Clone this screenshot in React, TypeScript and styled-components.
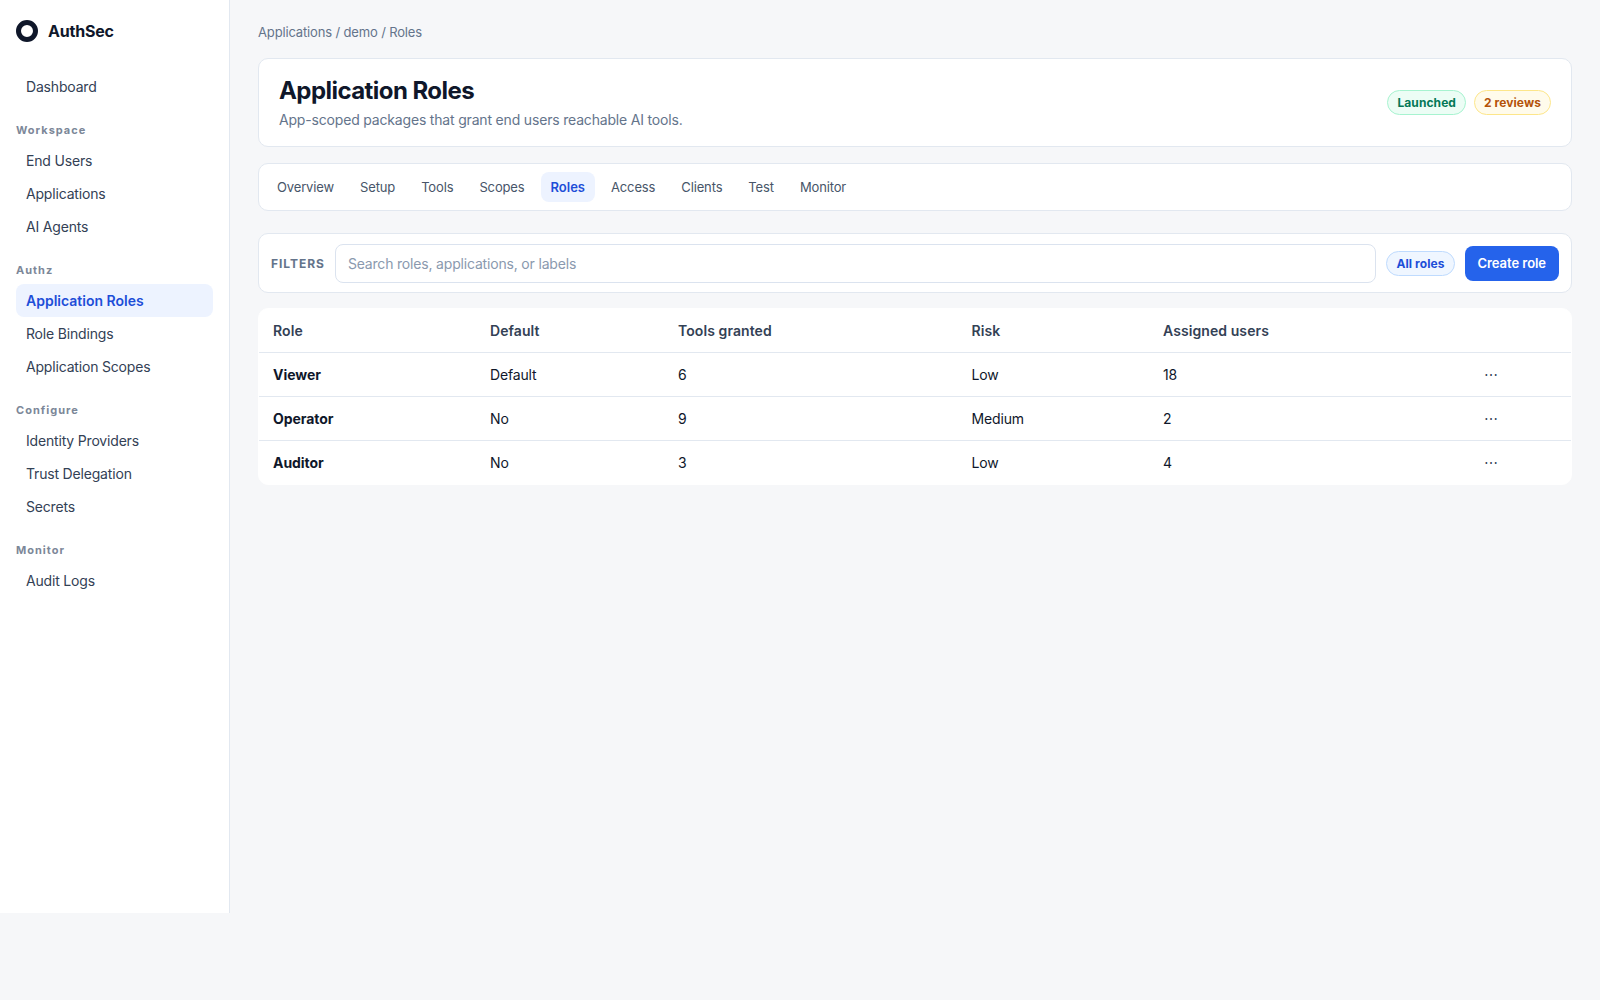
import React from "react";
import styled, { createGlobalStyle } from "styled-components";

const GlobalStyle = createGlobalStyle`
  html, body {
    margin: 0;
    padding: 0;
    background: #f6f7f9;
    font-family: Inter, "Noto Sans", sans-serif;
    color: #0f172a;
  }
  * {
    box-sizing: border-box;
  }
`;

const Shell = styled.div`
  display: flex;
  align-items: flex-start;
  min-height: 1000px;
`;

const Sidebar = styled.aside`
  width: 230px;
  height: 913px;
  flex-shrink: 0;
  padding: 20px 16px;
  background: #fff;
  border-right: 1px solid #e2e8f0;
`;

const Brand = styled.div`
  display: flex;
  align-items: center;
  gap: 10px;
  height: 22px;
  margin-bottom: 28px;
  font-size: 16px;
  font-weight: 700;
  letter-spacing: -0.2px;
  color: #0f172a;
`;

const Logo = styled.span`
  width: 22px;
  height: 22px;
  border-radius: 50%;
  border: 5.5px solid #0f172a;
`;

const NavGroup = styled.div`
  margin-bottom: 20px;
`;

const GroupLabel = styled.div`
  height: 14px;
  line-height: 14px;
  margin: 0 0 7px;
  font-size: 11px;
  font-weight: 700;
  letter-spacing: 1px;
  color: #7c8798;
`;

const NavItem = styled.a<{ $active?: boolean }>`
  display: block;
  height: 33px;
  padding: 0 10px;
  line-height: 33px;
  font-size: 14px;
  border-radius: 8px;
  font-weight: ${(p) => (p.$active ? 600 : 400)};
  letter-spacing: ${(p) => (p.$active ? "0" : "-0.18px")};
  color: ${(p) => (p.$active ? "#1d4ed8" : "#334155")};
  background: ${(p) => (p.$active ? "#edf3ff" : "transparent")};
`;

const Main = styled.main`
  flex: 1;
  min-width: 0;
  padding: 24px 28px;
`;

const Breadcrumb = styled.div`
  height: 17px;
  line-height: 17px;
  margin-bottom: 17px;
  font-size: 13px;
  letter-spacing: -0.15px;
  color: #64748b;
`;

const Card = styled.section`
  background: #fff;
  border: 1px solid #e2e8f0;
  border-radius: 10px;
`;

const HeaderCard = styled(Card)`
  display: flex;
  align-items: center;
  justify-content: space-between;
  height: 89px;
  padding: 0 20px;
  margin-bottom: 16px;
`;

const Title = styled.h1`
  margin: 0 0 3px;
  font-size: 24px;
  line-height: 32px;
  font-weight: 700;
  letter-spacing: -0.56px;
  color: #0f172a;
`;

const Subtitle = styled.p`
  margin: 0;
  font-size: 14px;
  line-height: 20px;
  letter-spacing: -0.18px;
  color: #64748b;
`;

const Badges = styled.div`
  display: flex;
  gap: 8px;
`;

const toneColors = {
  green: { bg: "#ecfdf5", border: "#a7f3d0", text: "#047857" },
  amber: { bg: "#fffbeb", border: "#fde68a", text: "#b45309" },
  blue: { bg: "#eff6ff", border: "#bfdbfe", text: "#1d4ed8" },
};

const Badge = styled.span<{ $tone: keyof typeof toneColors }>`
  display: inline-flex;
  align-items: center;
  height: 25px;
  padding: 0 9px;
  border-radius: 999px;
  font-size: 12px;
  font-weight: 700;
  letter-spacing: 0.08px;
  background: ${(p) => toneColors[p.$tone].bg};
  border: 1px solid ${(p) => toneColors[p.$tone].border};
  color: ${(p) => toneColors[p.$tone].text};
`;

const TabsCard = styled(Card)`
  display: flex;
  align-items: center;
  gap: 6px;
  height: 48px;
  padding: 0 8px;
  margin-bottom: 22px;
`;

const Tab = styled.a<{ $active?: boolean }>`
  height: 30px;
  padding: 0 10px;
  line-height: 30px;
  border-radius: 8px;
  font-size: 13px;
  font-weight: ${(p) => (p.$active ? 600 : 400)};
  letter-spacing: ${(p) => (p.$active ? "0" : "-0.14px")};
  color: ${(p) => (p.$active ? "#1d4ed8" : "#475569")};
  background: ${(p) => (p.$active ? "#edf3ff" : "transparent")};
`;

const FilterCard = styled(Card)`
  display: flex;
  align-items: center;
  gap: 10px;
  height: 60px;
  padding: 0 12px;
  margin-bottom: 15px;
`;

const FilterLabel = styled.span`
  font-size: 12px;
  font-weight: 700;
  letter-spacing: 0.96px;
  color: #64748b;
`;

const SearchInput = styled.input`
  flex: 1;
  min-width: 0;
  height: 39px;
  padding: 0 12px;
  background: #fff;
  border: 1px solid #dbe3ef;
  border-radius: 8px;
  outline: none;
  font-family: inherit;
  font-size: 14px;
  letter-spacing: -0.18px;

  &::placeholder {
    color: #8a99ae;
    opacity: 1;
  }
`;

const CreateButton = styled.button`
  height: 35px;
  padding: 0 13px;
  border: none;
  border-radius: 8px;
  background: #2563eb;
  color: #fff;
  font-family: inherit;
  font-size: 13px;
  font-weight: 600;
  letter-spacing: -0.05px;
`;

const TableCard = styled.div`
  background: #fff;
  border: 1px solid #fff;
  border-radius: 10px;
  overflow: hidden;
`;

const Table = styled.table`
  width: 100%;
  table-layout: fixed;
  border-collapse: separate;
  border-spacing: 0;
  font-size: 14px;
`;

const HeadCell = styled.th`
  height: 44px;
  padding: 0 14px;
  text-align: left;
  font-weight: 600;
  letter-spacing: 0.08px;
  color: #334155;
  border-bottom: 1px solid #e2e8f0;
`;

const Cell = styled.td`
  height: 44px;
  padding: 0 14px;
  letter-spacing: -0.15px;
  color: #0f172a;
  border-bottom: 1px solid #e2e8f0;
`;

const Row = styled.tr`
  &:last-child td {
    height: 43px;
    border-bottom: none;
  }
`;

const RoleCell = styled(Cell)`
  font-weight: 700;
  letter-spacing: -0.05px;
`;

const ActionCell = styled(Cell)`
  padding-left: 12.5px;
  color: #334155;
`;

const roles = [
  { name: "Viewer", isDefault: "Default", tools: 6, risk: "Low", users: 18 },
  { name: "Operator", isDefault: "No", tools: 9, risk: "Medium", users: 2 },
  { name: "Auditor", isDefault: "No", tools: 3, risk: "Low", users: 4 },
];

const navGroups = [
  { label: "Workspace", items: ["End Users", "Applications", "AI Agents"] },
  { label: "Authz", items: ["Application Roles", "Role Bindings", "Application Scopes"] },
  { label: "Configure", items: ["Identity Providers", "Trust Delegation", "Secrets"] },
  { label: "Monitor", items: ["Audit Logs"] },
];

const tabs = ["Overview", "Setup", "Tools", "Scopes", "Roles", "Access", "Clients", "Test", "Monitor"];

export default function App() {
  return (
    <Shell>
      <GlobalStyle />
      <Sidebar>
        <Brand>
          <Logo />
          AuthSec
        </Brand>
        <NavGroup>
          <NavItem>Dashboard</NavItem>
        </NavGroup>
        {navGroups.map((group) => (
          <NavGroup key={group.label}>
            <GroupLabel>{group.label}</GroupLabel>
            {group.items.map((item) => (
              <NavItem key={item} $active={item === "Application Roles"}>
                {item}
              </NavItem>
            ))}
          </NavGroup>
        ))}
      </Sidebar>
      <Main>
        <Breadcrumb>Applications / demo / Roles</Breadcrumb>
        <HeaderCard>
          <div>
            <Title>Application Roles</Title>
            <Subtitle>App-scoped packages that grant end users reachable AI tools.</Subtitle>
          </div>
          <Badges>
            <Badge $tone="green">Launched</Badge>
            <Badge $tone="amber">2 reviews</Badge>
          </Badges>
        </HeaderCard>
        <TabsCard>
          {tabs.map((tab) => (
            <Tab key={tab} $active={tab === "Roles"}>
              {tab}
            </Tab>
          ))}
        </TabsCard>
        <FilterCard>
          <FilterLabel>FILTERS</FilterLabel>
          <SearchInput placeholder="Search roles, applications, or labels" />
          <Badge $tone="blue">All roles</Badge>
          <CreateButton>Create role</CreateButton>
        </FilterCard>
        <TableCard>
          <Table>
            <colgroup>
              <col style={{ width: 217 }} />
              <col style={{ width: 188 }} />
              <col style={{ width: 293.5 }} />
              <col style={{ width: 191.5 }} />
              <col style={{ width: 322 }} />
              <col />
            </colgroup>
            <thead>
              <tr>
                <HeadCell>Role</HeadCell>
                <HeadCell>Default</HeadCell>
                <HeadCell>Tools granted</HeadCell>
                <HeadCell>Risk</HeadCell>
                <HeadCell>Assigned users</HeadCell>
                <HeadCell />
              </tr>
            </thead>
            <tbody>
              {roles.map((role) => (
                <Row key={role.name}>
                  <RoleCell>{role.name}</RoleCell>
                  <Cell>{role.isDefault}</Cell>
                  <Cell>{role.tools}</Cell>
                  <Cell>{role.risk}</Cell>
                  <Cell>{role.users}</Cell>
                  <ActionCell>⋯</ActionCell>
                </Row>
              ))}
            </tbody>
          </Table>
        </TableCard>
      </Main>
    </Shell>
  );
}
